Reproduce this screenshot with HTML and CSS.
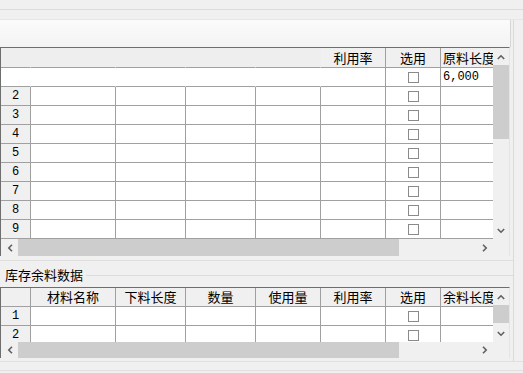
FILE: index.html
```html
<!DOCTYPE html>
<html>

<head>
    <title>库存余料</title>
    <link rel="stylesheet" href="styles.css">
</head>

<body>
    <div class="strip"></div>
    <div class="gap"></div>
    <div class="page">
        <div class="toolbar"></div>

        <div class="grid g1">
            <div class="view">
                <div class="row head">
                    <div class="c rh faded"></div>
                    <div class="c w85 faded"></div>
                    <div class="c w70 faded"></div>
                    <div class="c w70 faded"></div>
                    <div class="c w65 faded"></div>
                    <div class="c w65">利用率</div>
                    <div class="c w55">选用</div>
                    <div class="c wlast">原料长度</div>
                </div>
                <div class="row first">
                    <div class="c rh blank"></div>
                    <div class="c w85 blank"></div>
                    <div class="c w70 blank"></div>
                    <div class="c w70 blank"></div>
                    <div class="c w65 blank"></div>
                    <div class="c w65"></div>
                    <div class="c w55"><span class="chk"></span></div>
                    <div class="c wlast num">6,000</div>
                </div>
                <div id="rows1"></div>
            </div>
            <div class="vs">
                <div class="vbtn"><svg width="8" height="6"><polyline points="0.8,5 4,1.8 7.2,5" /></svg></div>
                <div class="vthumb t1"></div>
                <div class="vtrack"></div>
                <div class="vbtn"><svg width="8" height="6"><polyline points="0.8,1 4,4.2 7.2,1" /></svg></div>
            </div>
            <div class="hs">
                <div class="hbtn"><svg width="6" height="8"><polyline points="5,0.8 1.8,4 5,7.2" /></svg></div>
                <div class="hthumb"></div>
                <div class="htrack"></div>
                <div class="hbtn"><svg width="6" height="8"><polyline points="1,0.8 4.2,4 1,7.2" /></svg></div>
            </div>
            <div class="corner"></div>
        </div>

        <div class="sep"></div>
        <div class="group-label">
            <span>库存余料数据</span>
            <div class="group-line"></div>
        </div>

        <div class="grid g2">
            <div class="view">
                <div class="row head">
                    <div class="c rh"></div>
                    <div class="c w85">材料名称</div>
                    <div class="c w70">下料长度</div>
                    <div class="c w70">数量</div>
                    <div class="c w65">使用量</div>
                    <div class="c w65">利用率</div>
                    <div class="c w55">选用</div>
                    <div class="c wlast">余料长度</div>
                </div>
                <div id="rows2"></div>
            </div>
            <div class="vs">
                <div class="vbtn"><svg width="8" height="6"><polyline points="0.8,5 4,1.8 7.2,5" /></svg></div>
                <div class="vthumb t2"></div>
                <div class="vtrack"></div>
                <div class="vbtn"><svg width="8" height="6"><polyline points="0.8,1 4,4.2 7.2,1" /></svg></div>
            </div>
            <div class="hs">
                <div class="hbtn"><svg width="6" height="8"><polyline points="5,0.8 1.8,4 5,7.2" /></svg></div>
                <div class="hthumb"></div>
                <div class="htrack"></div>
                <div class="hbtn"><svg width="6" height="8"><polyline points="1,0.8 4.2,4 1,7.2" /></svg></div>
            </div>
            <div class="corner"></div>
        </div>
        <div class="foot"></div>
    </div>
    <div class="foot2"></div>

    <script>
        // plain rows: row header number, empty cells, checkbox in 选用
        function fillRows(id, from, to) {
            var box = document.getElementById(id);
            for (var i = from; i <= to; i++) {
                var row = document.createElement("div");
                row.className = "row";
                row.innerHTML =
                    '<div class="c rh num">' + i + '</div>' +
                    '<div class="c w85"></div>' +
                    '<div class="c w70"></div>' +
                    '<div class="c w70"></div>' +
                    '<div class="c w65"></div>' +
                    '<div class="c w65"></div>' +
                    '<div class="c w55"><span class="chk"></span></div>' +
                    '<div class="c wlast"></div>';
                box.appendChild(row);
            }
        }

        fillRows("rows1", 2, 9);
        fillRows("rows2", 1, 2);
    </script>
</body>

</html>
```

FILE: styles.css
```css
body {
    margin: 0;
    background-color: #f0f0f0;
    font-family: "Noto Sans CJK SC", sans-serif;
    font-size: 13px;
    color: #000;
    width: 523px;
    height: 373px;
    overflow: hidden;
}

.strip {
    height: 9px;
    border-bottom: 1px solid #dcdcdc;
}

.gap {
    height: 9px;
    border-bottom: 1px solid #e6e6e6;
}

.page {
    width: 513px;
    border-right: 1px solid #dadada;
}

.toolbar {
    height: 27px;
    width: 510px;
    background: linear-gradient(#fbfbfb, #f3f3f3);
    border-right: 1px solid #d6d6d6;
}

/* grid control: view + vertical bar / horizontal bar + corner */
.grid {
    display: grid;
    grid-template-columns: 492px 16px;
    width: 508px;
    border-top: 1px solid #6e6e6e;
    border-left: 1px solid #6e6e6e;
    border-right: 1px solid #e4e4e4;
}

.g1 {
    grid-template-rows: 191px 17px;
}

.g2 {
    grid-template-rows: 54px 16px;
}

.view {
    overflow: hidden;
    background-color: #fff;
}

.row {
    display: flex;
    height: 19px;
}

.g1 .head {
    height: 20px;
}

.c {
    flex: none;
    box-sizing: border-box;
    height: 100%;
    border-right: 1px solid #a0a0a0;
    border-bottom: 1px solid #a0a0a0;
    text-align: center;
    line-height: 18px;
    white-space: nowrap;
    overflow: hidden;
    display: flex;
    align-items: center;
    justify-content: center;
}

.head .c {
    background-color: #f0f0f0;
}

.rh {
    width: 30px;
    background-color: #f0f0f0;
}

.w85 {
    width: 85px;
}

.w70 {
    width: 70px;
}

.w65 {
    width: 65px;
}

.w55 {
    width: 55px;
}

.wlast {
    width: 80px;
    justify-content: flex-start;
    padding-left: 2px;
}

.num {
    font-family: "Liberation Mono", monospace;
    font-size: 12px;
}

.head .faded {
    background-color: #eeeeee;
    border-right-color: #eeeeee;
}

.first .blank {
    background-color: #fff;
    border-right-color: #fff;
}

.chk {
    display: block;
    width: 11px;
    height: 11px;
    box-sizing: border-box;
    border: 1px solid #8a8a8a;
    background-color: #fff;
}

/* scrollbars */
.vs,
.hs {
    display: flex;
    background-color: #f0f0f0;
}

.vs {
    flex-direction: column;
}

.vbtn {
    height: 17px;
    flex: none;
    display: flex;
    align-items: center;
    justify-content: center;
}

.hbtn {
    width: 17px;
    flex: none;
    display: flex;
    align-items: center;
    justify-content: center;
}

svg polyline {
    fill: none;
    stroke: #606060;
    stroke-width: 1.6;
}

.vthumb {
    flex: none;
    background-color: #cdcdcd;
}

.t1 {
    height: 74px;
}

.t2 {
    height: 18px;
}

.vtrack,
.htrack {
    flex: 1;
}

.hthumb {
    width: 381px;
    flex: none;
    background-color: #cdcdcd;
}

.corner {
    background-color: #f0f0f0;
}

/* lower section */
.sep {
    height: 4px;
    border-bottom: 1px solid #dedede;
}

.group-label {
    display: flex;
    align-items: center;
    height: 26px;
    padding-left: 5px;
}

.group-line {
    flex: 1;
    border-top: 1px solid #dcdcdc;
    margin-left: 3px;
    margin-top: 2px;
}

.foot {
    height: 3px;
}

.foot2 {
    height: 8px;
    border-top: 1px solid #e0e0e0;
    border-bottom: 1px solid #e0e0e0;
}
```
